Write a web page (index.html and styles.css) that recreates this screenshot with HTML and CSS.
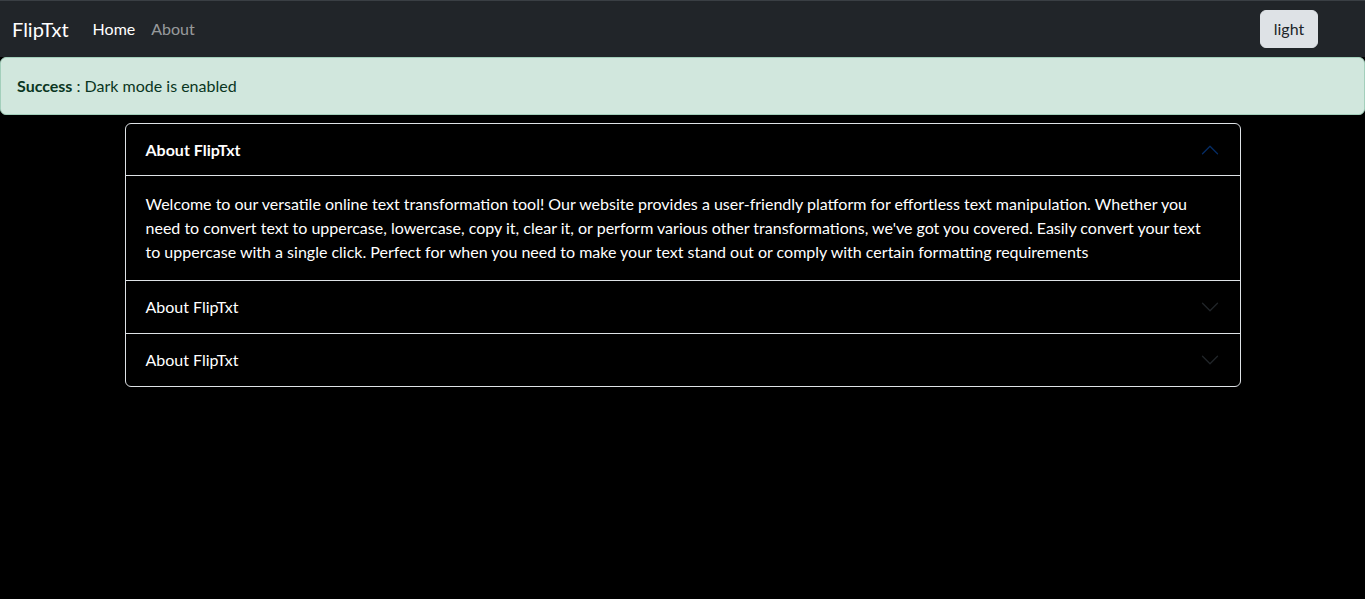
FILE: index.html
```html
<!DOCTYPE html>
<html>
<head>
<meta charset="utf-8">
<link rel="stylesheet" href="styles.css">
</head>
<body>
<nav class="navbar">
  <div class="nav-left">
    <a class="brand">FlipTxt</a>
    <a class="nav-link active">Home</a>
    <a class="nav-link">About</a>
  </div>
  <button class="mode-btn">light</button>
</nav>
<div class="alert"><strong>Success</strong> : Dark mode is enabled</div>
<div class="container">
  <div class="accordion">
    <div class="acc-item">
      <div class="acc-btn open">About FlipTxt
        <svg class="chev" viewBox="0 0 16 16" fill="none" stroke="#052c65" stroke-linecap="round" stroke-linejoin="round"><path d="M2 5L8 11L14 5"/></svg>
      </div>
      <div class="acc-body">Welcome to our versatile online text transformation tool! Our website provides a user-friendly platform for effortless text manipulation. Whether you need to convert text to uppercase, lowercase, copy it, clear it, or perform various other transformations, we've got you covered. Easily convert your text to uppercase with a single click. Perfect for when you need to make your text stand out or comply with certain formatting requirements</div>
    </div>
    <div class="acc-item">
      <div class="acc-btn">About FlipTxt
        <svg class="chev" viewBox="0 0 16 16" fill="none" stroke="#212529" stroke-linecap="round" stroke-linejoin="round"><path d="M2 5L8 11L14 5"/></svg>
      </div>
    </div>
    <div class="acc-item">
      <div class="acc-btn">About FlipTxt
        <svg class="chev" viewBox="0 0 16 16" fill="none" stroke="#212529" stroke-linecap="round" stroke-linejoin="round"><path d="M2 5L8 11L14 5"/></svg>
      </div>
    </div>
  </div>
</div>
</body>
</html>
```
FILE: styles.css
```css
* { box-sizing: border-box; }
body {
  margin: 0;
  background: #000;
  font-family: Lato, "Liberation Sans", sans-serif;
  font-size: 16px;
  line-height: 1.5;
  color: #fff;
}
.navbar {
  height: 57px;
  background: #212529;
  border-top: 1px solid #3a3f44;
  display: flex;
  align-items: center;
  justify-content: space-between;
  padding: 0 47px 0 12px;
}
.nav-left { display: flex; align-items: center; }
.brand { font-size: 20px; color: #fff; margin-right: 24px; }
.nav-link { color: rgba(255,255,255,0.55); margin-right: 16px; }
.nav-link.active { color: #fff; }
.mode-btn {
  font: inherit;
  font-size: 16px;
  color: #212529;
  background: #dee2e6;
  border: 1px solid #dee2e6;
  border-radius: 6px;
  height: 38px;
  width: 58px;
  padding: 0;
  margin-top: -1px;
}
.alert {
  background: #d1e7dd;
  border: 1px solid #a3cfbb;
  border-radius: 6px;
  color: #0a3622;
  padding: 16px;
  height: 58px;
  margin-bottom: 8px;
}
.alert strong { font-weight: 700; }
.container {
  width: 1140px;
  margin: 0 auto;
  padding: 0 12px;
}
.accordion {
  border: 1px solid #dee2e6;
  border-radius: 6px;
  overflow: hidden;
}
.acc-item + .acc-item { border-top: 1px solid #dee2e6; }
.acc-btn {
  height: 52px;
  display: flex;
  align-items: center;
  justify-content: space-between;
  padding: 0 20px;
}
.acc-btn.open {
  font-weight: 700;
  border-bottom: 1px solid #dee2e6;
}
.chev { width: 20px; height: 20px; }
.acc-btn.open .chev { transform: rotate(180deg); }
.acc-body { padding: 16px 20px; }
```
